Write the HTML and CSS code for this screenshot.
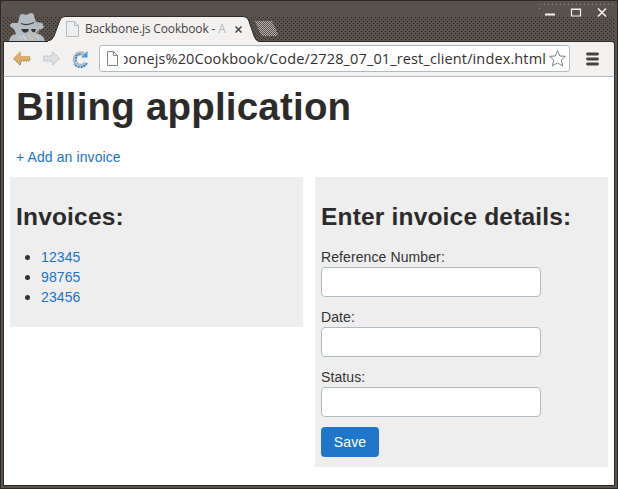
FILE: index.html
```html
<!DOCTYPE html>
<html lang="en">
<head>
<meta charset="utf-8">
<title>Backbone.js Cookbook</title>
<link rel="stylesheet" href="styles.css">
</head>
<body>
<div class="window">
  <header class="titlebar">
    <svg class="incognito" width="36" height="28" viewBox="0 0 36 28">
      <path d="M0 28 Q1 22 7 21 L5 16 Q1 14 1 12 L3 10 H9 L11 2 Q12 1 14 1 L17 2 L22 0 Q25 0 25 3 L27 9 L33 10 L35 14 Q34 16 29 17 L27 20 Q35 22 36 28Z" fill="#b2bcc2"/>
      <path d="M12 10.500 Q18 13 25 9.500" fill="none" stroke="#3c3937" stroke-width="1.200"/>
      <path d="M12 16 H20 L19 18.500 Q17 20.500 14 19Z M22 16 H27 L26 19 Q23 20 22 16Z" fill="#373330"/>
      <path d="M20 21 L23 27 L25 21 M24 2 V4 M29 17 V20" fill="none" stroke="#e3c18c"/>
      <path d="M10 23 L13 26 M14 22 L17 27 M27 22 L30 26" stroke="#dfe3e5" fill="none"/>
    </svg>
    <div class="tab">
      <svg class="tab-shape" width="210" height="26" viewBox="0 0 210 26">
        <path d="M0 26 V25 Q4 25 6 20 L12 4 Q13.500 .5 17 .5 H195 Q199 .5 200.500 4 L206 20 Q208 25 210 25 V26Z" fill="#f2f1f0"/>
        <path d="M0 24.500 Q4 25 6 20 L12 4 Q13.500 .5 17 .5 H195 Q199 .5 200.500 4 L206 20 Q208 25 210 24.500" fill="none" stroke="#2d2926"/>
      </svg>
      <div class="tab-body">
        <svg width="15" height="16" viewBox="0 0 15 16"><path d="M1.500 .5 H9.500 L13.500 4.500 V15.500 H1.500Z M9.500 .5 V4.500 H13.500" fill="#eceeef" stroke="#b1bbc1"/></svg>
        <span class="tab-title">Backbone.js Cookbook - <i>A</i></span>
        <svg class="tab-close" width="7" height="7" viewBox="0 0 7 7"><path d="M.5 .5 L6.500 6.500 M6.500 .5 L.5 6.500" stroke="#48433f" stroke-width="1.500"/></svg>
      </div>
    </div>
    <svg class="newtab" width="24" height="15" viewBox="0 0 24 15">
      <defs><pattern id="mesh" width="2" height="2" patternUnits="userSpaceOnUse"><path d="M0 0H1V1H0Z M1 1H2V2H1Z" fill="#b4b0aa"/></pattern></defs>
      <path d="M0 0 H17 L23 13 Q23 15 20 15 H8 Q6 15 5 12Z" fill="url(#mesh)"/>
    </svg>
    <svg class="controls" width="76" height="17" viewBox="0 0 76 17">
      <path d="M.5 5 V2 Q.5 .5 3 .5 H71 Q75 .5 75.500 3" fill="none" stroke="#a29c95" stroke-dasharray="1 3"/>
      <path d="M6 10.500 H16" stroke="#f2f0ee" stroke-width="2"/>
      <path d="M32.500 5 H41.500 V12 H32.500Z M32 5.500 H42" fill="none" stroke="#f2f0ee" stroke-width="1.200"/>
      <path d="M59 4.500 L67 12.500 M67 4.500 L59 12.500" stroke="#f2f0ee" stroke-width="1.700"/>
    </svg>
  </header>
  <nav class="toolbar">
    <svg width="19" height="17" viewBox="0 0 19 17"><path d="M1 8.500 L8 1.500 L9 2 V6 H18 L18.500 8.500 L17.500 11 H9 V15 L8 15.500Z" fill="#dfad6c"/><path d="M2 9 L8 15 L9 11 H17 L18.500 9" fill="none" stroke="#66533e" stroke-dasharray="1 1.500"/></svg>
    <svg class="forward" width="19" height="17" viewBox="0 0 19 17"><path d="M17.500 8.500 L11 2 L10 2.500 V6 H1.500 V11 H10 V14.500 L11 15Z" fill="#dce0e2" stroke="#b3bdc3" stroke-dasharray="2 1"/></svg>
    <svg class="reload" width="18" height="18" viewBox="0 0 18 18"><path d="M15 13 A6.200 6.200 0 1 1 13 4" fill="none" stroke="#afbcc6" stroke-width="4"/><path d="M16 13 A7.500 7.500 0 0 1 3 14 M5 6 Q8 3.500 11 5 M5 7 V11" fill="none" stroke="#2d7dce" stroke-width="1.500" stroke-dasharray="2 1"/><path d="M16.500 1 V7.500 H10Z" fill="#4c94d8"/></svg>
    <div class="address">
      <svg width="13" height="16" viewBox="0 0 13 16"><path d="M1.500 .5 H7.500 L11.500 4.500 V14.500 H1.500Z M7.500 .5 V4.500 H11.500" fill="#fafafa" stroke="#7e8589"/></svg>
      <div class="url"><span>bonejs%20Cookbook/Code/2728_07_01_rest_client/index.html</span></div>
      <svg class="star" width="19" height="19" viewBox="0 0 19 19"><path d="M9.500 1.500 L11.800 7 L17.500 7.300 L13.200 11 L14.700 17 L9.500 13.800 L4.300 17 L5.800 11 L1.500 7.300 L7.200 7Z" fill="#fff" stroke="#7b8388"/></svg>
    </div>
    <svg class="menu" width="13" height="14" viewBox="0 0 13 14"><path d="M1.500 2 H11.500 M1.500 7 H11.500 M1.500 12 H11.500" stroke="#46423f" stroke-width="2.800" stroke-linecap="round"/></svg>
  </nav>
  <main class="page">
    <h1>Billing application</h1>
    <a class="add" href="#">+ Add an invoice</a>
    <div class="columns">
      <section class="panel">
        <h2>Invoices:</h2>
        <ul>
          <li><a href="#">12345</a></li>
          <li><a href="#">98765</a></li>
          <li><a href="#">23456</a></li>
        </ul>
      </section>
      <section class="panel">
        <h2>Enter invoice details:</h2>
        <form>
          <label for="ref">Reference Number:</label>
          <input id="ref" type="text">
          <label for="date">Date:</label>
          <input id="date" type="text">
          <label for="status">Status:</label>
          <input id="status" type="text">
          <button type="button">Save</button>
        </form>
      </section>
    </div>
  </main>
</div>
</body>
</html>
```
FILE: styles.css
```css
* { box-sizing: border-box; }
body { margin: 0; background: #2d2926; overflow: hidden; }
.window {
  width: 618px;
  height: 489px;
  display: flex;
  flex-direction: column;
  border: 1px solid #2d2926;
  border-top-left-radius: 3px;
  background: #5a534d;
  padding: 0 2px 2px;
}
.titlebar {
  height: 40px;
  flex: none;
  display: flex;
  align-items: flex-end;
  background:
    linear-gradient(#59524c 0 15px, transparent 15px),
    conic-gradient(#302c29 25%, transparent 0) 0 15px / 2px 2px,
    #59524c;
  background:
    linear-gradient(#59524c 0 15px, transparent 15px),
    linear-gradient(#302c29, #302c29) 0 0 / 0 0,
    radial-gradient(circle at 0.5px 0.5px, #2d2926 0.6px, transparent 0.7px) 0 0 / 4px 4px,
    radial-gradient(circle at 0.5px 0.5px, #2d2926 0.6px, transparent 0.7px) 2px 2px / 4px 4px,
    #59524c;
}
.incognito { margin-left: 6px; flex: none; }
.tab { width: 210px; height: 26px; margin-left: 3px; display: grid; flex: none; }
.tab-shape, .tab-body { grid-area: 1 / 1; }
.tab-shape { position: relative; top: 1px; }
.tab-body {
  position: relative;
  display: flex;
  align-items: center;
  padding: 2px 0 0 17px;
  font: 12px/16px "Open Sans", "Noto Sans", sans-serif;
  color: #45413e;
}
.tab-title { width: 140px; margin-left: 5px; white-space: nowrap; letter-spacing: -0.15px; }
.tab-title i { font-style: normal; color: #b2bcc2; }
.tab-close { margin-left: 10px; }
.newtab { margin: 0 0 5px -3px; }
.controls { margin: 0 0 20px auto; }
.toolbar {
  height: 36px;
  flex: none;
  display: flex;
  align-items: center;
  padding: 0 15px 1px 8px;
  background: #f2f1f0;
  border: 1px solid #2d2926;
  border-bottom: 1px solid #b0bbbf;
  border-top-right-radius: 3px;
}
.forward { margin-left: 11px; }
.reload { margin-left: 10px; }
.address {
  width: 471px;
  height: 27px;
  margin-left: 10px;
  display: flex;
  align-items: center;
  padding: 0 2px 0 6px;
  border: 1px solid #aeb9c0;
  border-radius: 3px;
  background: #fff;
}
.address svg { flex: none; }
.url {
  flex: 1;
  min-width: 0;
  margin-left: 5px;
  display: flex;
  justify-content: flex-end;
  overflow: hidden;
  white-space: nowrap;
  font: 14.5px/22px "Open Sans", "Noto Sans", sans-serif;
  letter-spacing: 0.13px;
  color: #35312f;
}
.star { margin-left: 2px; }
.menu { margin-left: auto; }
.page {
  flex: 1;
  padding: 10px 6px 0;
  background: #fff;
  border: 1px solid #2d2926;
  border-top: 0;
  font: 14px/20px "Liberation Sans", Arial, sans-serif;
  letter-spacing: 0.1px;
  color: #333;
}
h1, h2 { margin: 0; line-height: 40px; color: #2d2b2a; }
h1 { margin-left: 6px; font-size: 38.5px; letter-spacing: 0.2px; }
h2 { margin: 20px 0 10px; font-size: 24.5px; letter-spacing: 0.18px; }
a { color: #1c74c8; text-decoration: none; }
.add { display: block; margin: 20px 6px 10px; }
.columns { display: flex; align-items: flex-start; gap: 12px; }
.panel { flex: 1; display: flow-root; padding: 0 6px; background: #eee; }
ul { margin: 0 0 20px 25px; padding: 0; }
li::marker { font-size: 16px; }
form { display: flex; flex-direction: column; align-items: flex-start; }
input {
  width: 220px;
  height: 30px;
  margin: 0 0 10px;
  border: 1px solid #afbbc3;
  border-radius: 4px;
  background: #fff;
}
button {
  width: 58px;
  height: 30px;
  margin: 0 0 10px;
  border: 0;
  border-radius: 4px;
  background: #1f76cb;
  color: #fff;
  font: inherit;
  letter-spacing: inherit;
}
```
